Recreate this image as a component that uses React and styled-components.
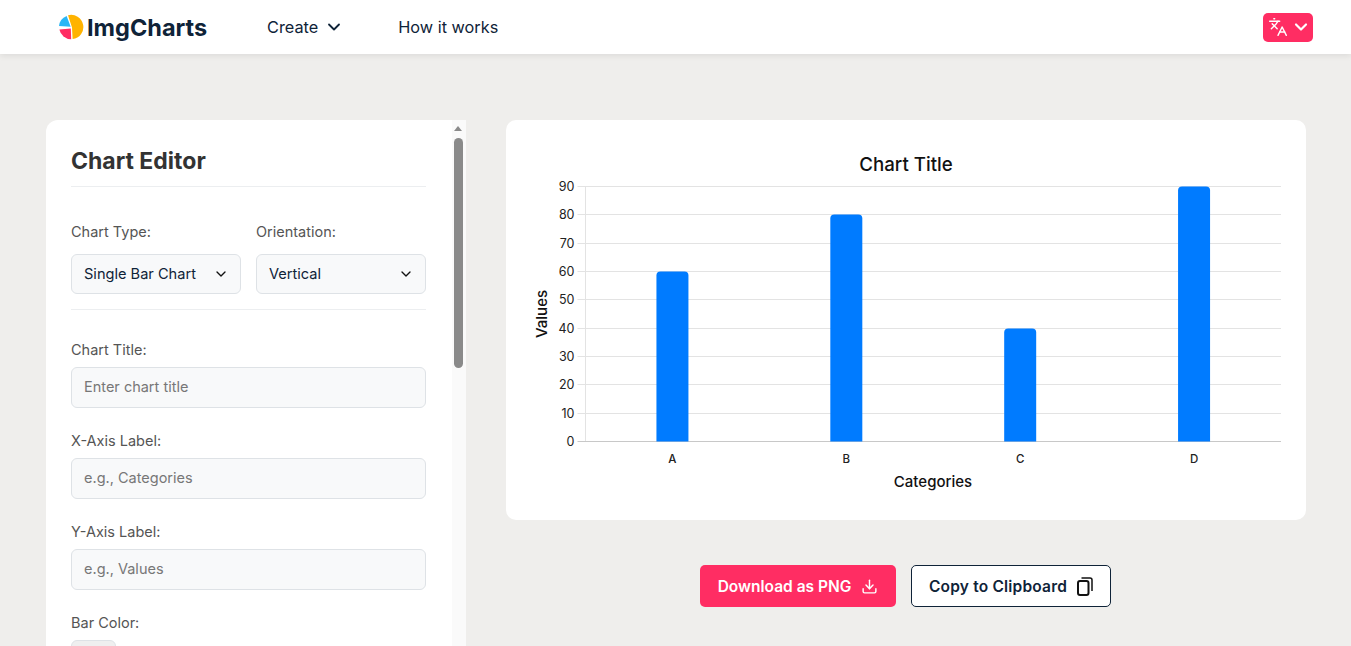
import React from 'react';
import styled, { createGlobalStyle } from 'styled-components';
import { ChevronDown, Download, Languages } from 'lucide-react';

const GlobalStyle = createGlobalStyle`
  html, body {
    margin: 0;
    height: 100%;
    overflow: hidden;
    background-color: #efeeec;
    font-family: Inter, "Noto Sans", sans-serif;
  }
  * {
    box-sizing: border-box;
  }
`;

const Header = styled.header`
  display: flex;
  align-items: center;
  height: 54px;
  padding: 0 38px 0 58px;
  background-color: #fff;
  box-shadow: 0 2px 6px rgba(0, 0, 0, 0.08);
`;

const Brand = styled.a`
  display: flex;
  align-items: center;
  gap: 3px;
  width: 209px;
  font-size: 23.5px;
  font-weight: 700;
  color: #0f2338;
`;

const NavItem = styled.a`
  display: flex;
  align-items: center;
  gap: 6px;
  margin-right: 54px;
  font-size: 16.3px;
  font-weight: 400;
  color: #0f2338;
`;

const LangButton = styled.button`
  display: flex;
  align-items: center;
  gap: 3px;
  width: 50px;
  height: 29px;
  margin-left: auto;
  padding: 0 0 0 5px;
  border: none;
  border-radius: 5px;
  background-color: #ff2d63;
  color: #fff;
`;

const Main = styled.main`
  display: flex;
  align-items: flex-start;
  gap: 40px;
  height: calc(100vh - 54px);
  padding: 66px 45px 0 46px;
  overflow: hidden;
`;

const EditorPanel = styled.section`
  display: flex;
  flex: none;
  width: 420px;
  height: 100%;
  border-radius: 12px 0 0 0;
  background-color: #fff;
  overflow: hidden;
`;

const EditorBody = styled.div`
  flex: 1;
  padding: 25px 26px 0 25px;
`;

const Heading = styled.h2`
  height: 42px;
  margin: 0;
  border-bottom: 1px solid #eceef0;
  font-size: 23px;
  font-weight: 700;
  line-height: 33px;
  color: #333;
`;

const TypeRow = styled.div`
  display: grid;
  grid-template-columns: 170px 170px;
  gap: 15px;
  padding: 35px 0 15px;
  border-bottom: 1px solid #eceef0;
`;

const Field = styled.div`
  display: flex;
  flex-direction: column;
  gap: ${(p) => p.$gap || '7px'};
`;

const FieldStack = styled.div`
  display: flex;
  flex-direction: column;
  gap: 23px;
  padding-top: 30px;
`;

const Label = styled.label`
  margin-top: -1px;
  font-size: 14.5px;
  line-height: 21px;
  color: #555;
`;

const SelectBox = styled.div`
  display: flex;
  align-items: center;
  justify-content: space-between;
  height: 40px;
  padding: 0 11px 0 12px;
  border: 1px solid #dee2e6;
  border-radius: 6px;
  background-color: #f8f9fa;
  font-size: 14.6px;
  color: #0f2338;
`;

const TextInput = styled.input`
  width: 100%;
  height: 41px;
  padding: 0 12px 2px;
  border: 1px solid #dee2e6;
  border-radius: 6px;
  background-color: #f8f9fa;
  font-family: inherit;
  font-size: 14.5px;

  &::placeholder {
    color: #777;
    opacity: 1;
  }
`;

const Swatch = styled.div`
  width: 45px;
  height: 40px;
  border: 1px solid #dee2e6;
  border-radius: 6px;
  background-color: #efefef;
`;

const ScrollTrack = styled.div`
  display: flex;
  flex: none;
  flex-direction: column;
  align-items: flex-start;
  width: 14px;
  padding-left: 2px;
  background-color: #fafafa;
`;

const ScrollArrow = styled.div`
  width: 0;
  height: 0;
  margin: 6px 0 0 0;
  border-right: 4.5px solid transparent;
  border-bottom: 5px solid #8a8a8a;
  border-left: 4.5px solid transparent;
`;

const ScrollThumb = styled.div`
  width: 9px;
  height: 230px;
  margin-top: 7px;
  border-radius: 5px;
  background-color: #8a8a8a;
`;

const PreviewColumn = styled.section`
  flex: 1;
  display: flex;
  flex-direction: column;
  align-items: center;
`;

const ChartCard = styled.div`
  width: 100%;
  height: 400px;
  border-radius: 10px;
  background-color: #fff;
`;

const ChartSvg = styled.svg`
  display: block;
  width: 800px;
  height: 400px;
  font-family: Inter, "Noto Sans", sans-serif;
`;

const Actions = styled.div`
  display: flex;
  gap: 15px;
  margin: 45px 1px 0 0;
`;

const ActionButton = styled.button`
  display: flex;
  align-items: center;
  justify-content: center;
  gap: 10px;
  width: ${(p) => (p.$primary ? '196px' : '200px')};
  height: 42px;
  padding: 0;
  border: ${(p) => (p.$primary ? 'none' : '1px solid #0f2338')};
  border-radius: 5px;
  background-color: ${(p) => (p.$primary ? '#ff2d63' : '#fff')};
  color: ${(p) => (p.$primary ? '#fff' : '#0f2338')};
  font-family: inherit;
  font-size: 15.5px;
  font-weight: 600;
  letter-spacing: ${(p) => (p.$primary ? '0' : '0.2px')};
`;

const LogoIcon = () => (
  <svg width="26" height="26" viewBox="0 0 26 26">
    <path d="M10 1.2A12.2 12.2 0 1 1 14.6 25.1L14 13.6Z" fill="#ffb300" />
    <path d="M8.6 1.9L12.7 12.7L1 12A12.2 12.2 0 0 1 8.6 1.9Z" fill="#29b6f6" />
    <path d="M1.4 15.4L12.8 14.6L13.2 25.2A12.2 12.2 0 0 1 1.4 15.4Z" fill="#ff2d63" />
  </svg>
);

const CopyIcon = () => (
  <svg width="16" height="19" viewBox="0 0 16 19" fill="none" stroke="#111">
    <rect x="1" y="4" width="10.5" height="14" rx="2" strokeWidth="2" />
    <path d="M4.5 1H13a2 2 0 0 1 2 2V14" strokeWidth="1.5" />
  </svg>
);

const bars = [
  { name: 'A', value: 60 },
  { name: 'B', value: 80 },
  { name: 'C', value: 40 },
  { name: 'D', value: 90 },
];
const ticks = [0, 10, 20, 30, 40, 50, 60, 70, 80, 90];

// plot area in card coordinates
const left = 79.5;
const right = 775;
const top = 66.5;
const bottom = 321.5;
const yFor = (v) => Math.round(bottom - ((bottom - top) * v) / 90 - 0.5) + 0.5;
const band = (right - left) / bars.length;

const BarChart = () => (
  <ChartSvg viewBox="0 0 800 400">
    <text x="400" y="50.5" textAnchor="middle" fontSize="18.7" fontWeight="500" fill="#111">Chart Title</text>
    <line x1={left} x2={left} y1={top} y2={bottom} stroke="#e3e3e3" />
    {ticks.map((t) => (
      <g key={t}>
        <line x1={left - 8} x2={right} y1={yFor(t)} y2={yFor(t)} stroke={t === 0 ? '#c8c8c8' : '#e3e3e3'} />
        <text x={left - 11} y={yFor(t) + 4.5} textAnchor="end" fontSize="12.5" fill="#222">{t}</text>
      </g>
    ))}
    {bars.map((b, i) => {
      const x = left + band * i + band / 2;
      const y = yFor(b.value);
      return (
        <g key={b.name}>
          <path d={`M${x - 16} ${bottom}V${y + 4}a4 4 0 0 1 4-4h24a4 4 0 0 1 4 4V${bottom}Z`} fill="#007bff" />
          <text x={x} y="343" textAnchor="middle" fontSize="11.5" fontWeight="500" fill="#222">{b.name}</text>
        </g>
      );
    })}
    <text x="427" y="366.5" textAnchor="middle" fontSize="15" fontWeight="500" fill="#111">Categories</text>
    <text transform="translate(41 194) rotate(-90)" textAnchor="middle" fontSize="15" fontWeight="500" fill="#111">Values</text>
  </ChartSvg>
);

const App = () => {
  return (
    <>
      <GlobalStyle />
      <Header>
        <Brand><LogoIcon />ImgCharts</Brand>
        <NavItem>Create <ChevronDown size={20} strokeWidth={2.2} /></NavItem>
        <NavItem>How it works</NavItem>
        <LangButton>
          <Languages size={20} strokeWidth={1.7} />
          <ChevronDown size={20} strokeWidth={2.6} />
        </LangButton>
      </Header>
      <Main>
        <EditorPanel>
          <EditorBody>
            <Heading>Chart Editor</Heading>
            <TypeRow>
              <Field $gap="12px">
                <Label>Chart Type:</Label>
                <SelectBox>Single Bar Chart <ChevronDown size={16} strokeWidth={2} color="#111" /></SelectBox>
              </Field>
              <Field $gap="12px">
                <Label>Orientation:</Label>
                <SelectBox>Vertical <ChevronDown size={16} strokeWidth={2} color="#111" /></SelectBox>
              </Field>
            </TypeRow>
            <FieldStack>
              <Field>
                <Label>Chart Title:</Label>
                <TextInput placeholder="Enter chart title" />
              </Field>
              <Field>
                <Label>X-Axis Label:</Label>
                <TextInput placeholder="e.g., Categories" />
              </Field>
              <Field>
                <Label>Y-Axis Label:</Label>
                <TextInput placeholder="e.g., Values" />
              </Field>
              <Field>
                <Label>Bar Color:</Label>
                <Swatch />
              </Field>
            </FieldStack>
          </EditorBody>
          <ScrollTrack>
            <ScrollArrow />
            <ScrollThumb />
          </ScrollTrack>
        </EditorPanel>
        <PreviewColumn>
          <ChartCard>
            <BarChart />
          </ChartCard>
          <Actions>
            <ActionButton $primary>Download as PNG <Download size={17} strokeWidth={2} /></ActionButton>
            <ActionButton>Copy to Clipboard <CopyIcon /></ActionButton>
          </Actions>
        </PreviewColumn>
      </Main>
    </>
  );
};

export default App;
